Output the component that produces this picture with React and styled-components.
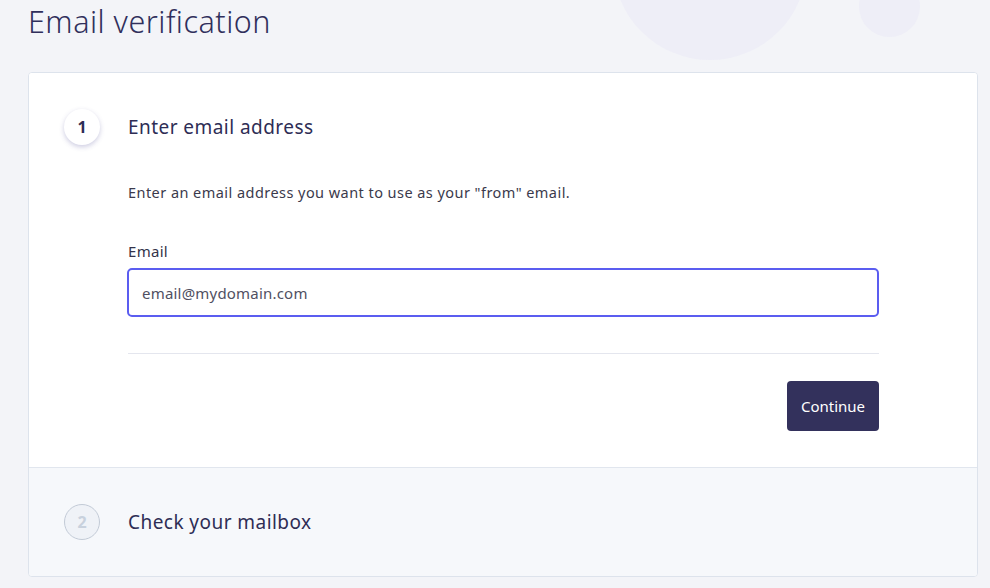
import { useState } from 'react';
import styled, { createGlobalStyle } from 'styled-components';

const GlobalStyle = createGlobalStyle`
  html, body {
    margin: 0;
    padding: 0;
    background: #f3f4f8;
    font-family: 'Noto Sans', 'Lato', sans-serif;
  }
`;

function Step({ number, title, active, children }) {
  return (
    <Section $active={active}>
      <StepHeader>
        <StepBadge $active={active}>{number}</StepBadge>
        <StepTitle>{title}</StepTitle>
      </StepHeader>
      {children && <StepBody>{children}</StepBody>}
    </Section>
  );
}

function App() {
  const [email, setEmail] = useState('email@mydomain.com');

  return (
    <Page>
      <GlobalStyle />
      <Decor>
        <BigBlob />
        <SmallBlob />
      </Decor>
      <Heading>Email verification</Heading>
      <Card>
        <Step number='1' title='Enter email address' active>
          <Description>Enter an email address you want to use as your "from" email.</Description>
          <Field>
            <Label htmlFor='email'>Email</Label>
            <Input id='email' type='text' autoFocus value={email} onChange={(e) => setEmail(e.target.value)} />
          </Field>
          <Divider />
          <Actions>
            <Button type='button'>Continue</Button>
          </Actions>
        </Step>
        <Step number='2' title='Check your mailbox' />
      </Card>
    </Page>
  );
}

const Page = styled.div`
  position: relative;
  min-height: 588px;
  padding: 0 12px 0 28px;
  box-sizing: border-box;
  overflow: hidden;
`;

const Decor = styled.div`
  position: absolute;
  inset: 0;
  pointer-events: none;
`;

const BigBlob = styled.div`
  position: absolute;
  left: 613px;
  top: -134px;
  width: 194px;
  height: 194px;
  border-radius: 50%;
  background: #eeeef7;
`;

const SmallBlob = styled.div`
  position: absolute;
  left: 859px;
  top: -24px;
  width: 61px;
  height: 61px;
  border-radius: 50%;
  background: #eeeef7;
`;

const Heading = styled.h1`
  position: relative;
  margin: 0;
  padding-top: 1px;
  height: 71px;
  font-family: 'Noto Sans', sans-serif;
  font-weight: 300;
  font-size: 30.5px;
  line-height: 40px;
  color: #302f5c;
  letter-spacing: 0.5px;
`;

const Card = styled.div`
  position: relative;
  background: #ffffff;
  border: 1px solid #dde3ec;
  border-radius: 4px;
  overflow: hidden;
`;

const Section = styled.div`
  background: ${(p) => (p.$active ? '#ffffff' : '#f6f8fb')};
  padding: 36px 98px 36px 35px;

  & + & {
    border-top: 1px solid #e1e6ee;
  }
`;

const StepHeader = styled.div`
  display: flex;
  align-items: center;
  gap: 28px;
  height: 36px;
`;

const StepBadge = styled.div`
  width: 36px;
  height: 36px;
  box-sizing: border-box;
  border-radius: 50%;
  display: flex;
  align-items: center;
  justify-content: center;
  font-size: 16px;
  font-weight: 700;
  color: ${(p) => (p.$active ? '#2e2d55' : '#c8d1dd')};
  background: ${(p) => (p.$active ? '#ffffff' : '#eff2f7')};
  border: ${(p) => (p.$active ? 'none' : '1px solid #c2cad6')};
  box-shadow: ${(p) => (p.$active ? '0 2px 5px rgba(60, 55, 140, 0.25)' : 'none')};
`;

const StepTitle = styled.h2`
  margin: 0;
  font-size: 19px;
  font-weight: 400;
  letter-spacing: 0.45px;
  color: #2e2d55;
`;

const StepBody = styled.div`
  padding-left: 64px;
  padding-top: 36px;
`;

const Description = styled.p`
  margin: 0;
  font-size: 14.5px;
  line-height: 22px;
  letter-spacing: 0.45px;
  color: #3b3a4c;
`;

const Field = styled.div`
  display: flex;
  flex-direction: column;
  margin-top: 38px;
`;

const Label = styled.label`
  font-size: 15px;
  line-height: 20px;
  letter-spacing: 0.3px;
  color: #34334a;
  margin-bottom: 7px;
`;

const Input = styled.input`
  all: unset;
  box-sizing: border-box;
  height: 49px;
  margin-left: -1px;
  border: 2px solid #5b5df0;
  border-radius: 5px;
  padding: 0 13px;
  font-family: 'Noto Sans', sans-serif;
  font-size: 15px;
  letter-spacing: 0.2px;
  color: #505062;
  caret-color: #222;
`;

const Divider = styled.hr`
  margin: 36px 0 0;
  border: none;
  border-top: 1px solid #e4e6ee;
`;

const Actions = styled.div`
  display: flex;
  justify-content: flex-end;
  margin-top: 27px;
`;

const Button = styled.button`
  all: unset;
  box-sizing: border-box;
  width: 92px;
  height: 50px;
  border-radius: 4px;
  background: #33315c;
  color: #ffffff;
  font-size: 15px;
  text-align: center;
  cursor: pointer;

  &:hover {
    background: #2a2850;
  }
`;

export default App;
